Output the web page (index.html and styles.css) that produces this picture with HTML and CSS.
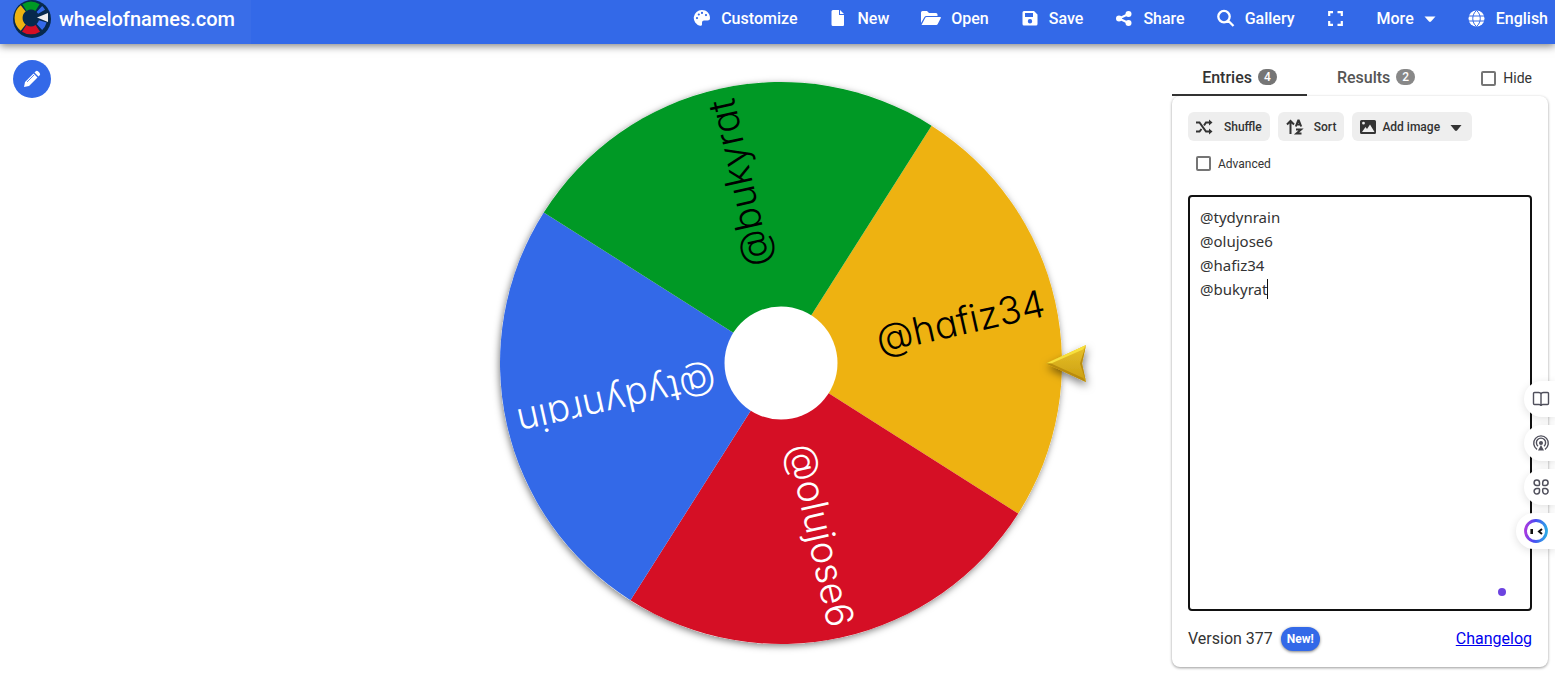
FILE: index.html
```html
<!DOCTYPE html>
<html lang="en">
<head>
  <meta charset="UTF-8">
  <meta name="viewport" content="width=device-width, initial-scale=1.0">
  <title>Wheel of Names</title>
  <link rel="stylesheet" href="styles.css">
</head>
<body>
  <header class="toolbar">
    <a class="brand" href="#">
      <svg class="logo" viewBox="0 0 38 38">
        <circle cx="19" cy="19" r="19" fill="#07294d"/>
        <g fill="none" stroke-width="8" transform="translate(18 18)">
          <path d="M-6.5-10.4A12.2 12.2 0 0 1 6.5-10.4" stroke="#009925"/>
          <path d="M-7.8 9.6A12.3 12.3 0 0 1-7.8-9.6" stroke="#eeb211"/>
          <path d="M6.8 10.3A12.3 12.3 0 0 1-6.8 10.3" stroke="#d50f25"/>
          <path d="M8.4-9A12.3 12.3 0 0 1 10.6-6.2M11.8 3.4A12.3 12.3 0 0 1 8.4 9" stroke="#3369e8"/>
        </g>
        <path d="M24 17.500L35 13v9z" fill="#eee"/>
      </svg>
      <span>wheelofnames.com</span>
    </a>
    <nav class="menu">
      <button class="menu-btn" type="button">
        <svg class="icon" viewBox="0 0 18 18"><path fill="currentColor" fill-rule="evenodd" d="M9 1a8 8 0 0 0-2 15.800C8 17 9 16.500 9 15.500V13.500a2 2 0 0 1 2-2h3.500A2.500 2.500 0 0 0 17 9C17 4.500 13.500 1 9 1zM4 10.200a1.100 1.100 0 1 1 0-2.200 1.100 1.100 0 0 1 0 2.200zM5.800 6.600a1.100 1.100 0 1 1 0-2.200 1.100 1.100 0 0 1 0 2.200zM9 5a1.100 1.100 0 1 1 0-2.200A1.100 1.100 0 0 1 9 5zM13 7.200A1.100 1.100 0 1 1 13 5a1.100 1.100 0 0 1 0 2.200z"/></svg>
        Customize
      </button>
      <button class="menu-btn" type="button">
        <svg class="icon" viewBox="0 0 18 18"><path fill="currentColor" d="M4 1h6v5h5v10a1 1 0 0 1-1 1H4a1.500 1.500 0 0 1-1.500-1.500v-13A1.500 1.500 0 0 1 4 1zM11 1l4 4h-4z"/></svg>
        New
      </button>
      <button class="menu-btn" type="button">
        <svg class="icon open" viewBox="0 0 20 18"><path fill="currentColor" d="M0 14V3.500A1.500 1.500 0 0 1 1.500 2H6l2 2h7a1.500 1.500 0 0 1 1.500 1.500V7H5.500a2.500 2.500 0 0 0-2.200 1.300zM.5 16l3.800-7.200A1.500 1.500 0 0 1 5.500 8h13.700a.7.7 0 0 1 .6 1l-3.200 6.200a1.500 1.500 0 0 1-1.300.8z"/></svg>
        Open
      </button>
      <button class="menu-btn" type="button">
        <svg class="icon" viewBox="0 0 18 18"><path fill="currentColor" fill-rule="evenodd" d="M3 2h10l3.500 3.500V15A1.500 1.500 0 0 1 15 16.500H3A1.500 1.500 0 0 1 1.500 15V3.500A1.500 1.500 0 0 1 3 2zM4 4v4h8V4zM9 10a2.200 2.200 0 1 0 0 4.400A2.200 2.200 0 0 0 9 10z"/></svg>
        Save
      </button>
      <button class="menu-btn" type="button">
        <svg class="icon" viewBox="0 0 18 18"><g fill="currentColor"><circle cx="4" cy="9.500" r="3"/><circle cx="13.500" cy="5" r="3"/><circle cx="13.500" cy="14" r="3"/></g><path d="M13.500 5L4 9.500l9.500 4.500" fill="none" stroke="currentColor" stroke-width="2"/></svg>
        Share
      </button>
      <button class="menu-btn" type="button">
        <svg class="icon" viewBox="0 0 18 18"><path d="M11.500 12l5 5M12.700 7.600a5.700 5.700 0 1 1-11.400 0 5.700 5.700 0 0 1 11.400 0z" fill="none" stroke="currentColor" stroke-width="2.300"/></svg>
        Gallery
      </button>
      <button class="menu-btn" type="button" aria-label="Fullscreen">
        <svg class="icon" viewBox="0 0 18 18"><path d="M2.200 7V3.200H6M10.500 3.200h4.300V7M14.800 12v3.800h-4.300M6 15.800H2.200V12" fill="none" stroke="currentColor" stroke-width="2.200"/></svg>
      </button>
      <button class="menu-btn" type="button">
        More
        <svg class="icon caret" viewBox="0 0 12 18"><path d="M.5 7.500h11L7 12.500a1.500 1.500 0 0 1-2 0z" fill="currentColor"/></svg>
      </button>
      <button class="menu-btn" type="button">
        <svg class="icon" viewBox="0 0 18 18"><circle cx="8.500" cy="9.500" r="8" fill="currentColor"/><path d="M.5 7h16M.5 12h16M8.500 1.500c-5 4-5 12 0 16M8.500 1.500c5 4 5 12 0 16" fill="none" stroke="#3369e8"/></svg>
        English
      </button>
    </nav>
  </header>

  <main class="page">
    <button class="edit-btn" type="button" aria-label="Edit title">
      <svg viewBox="0 0 18 18"><path fill="#fff" d="M1 17l1-5L10.500 3.500l4 4L6 16zM11.500 2.500l1-1a2 2 0 0 1 2.800 0l1.200 1.200a2 2 0 0 1 0 2.800l-1 1z"/><path d="M4 12l7-7" stroke="#3369e8" stroke-width=".8"/></svg>
    </button>

    <svg class="wheel" viewBox="0 0 620 606">
      <defs>
        <filter id="wheelShadow" x="-10%" y="-10%" width="120%" height="120%">
          <feDropShadow dx="-1" dy="2" stdDeviation="3.500" flood-opacity=".5"/>
        </filter>
        <filter id="pointerShadow" x="-50%" y="-50%" width="200%" height="200%">
          <feDropShadow dx="1" dy="4" stdDeviation="4" flood-opacity=".5"/>
        </filter>
        <linearGradient id="gold" x1="0" y1="0" x2="0" y2="1">
          <stop offset="0" stop-color="#e9c22b"/>
          <stop offset="1" stop-color="#c99d10"/>
        </linearGradient>
      </defs>
      <g transform="translate(310 303)">
        <circle r="281" fill="#fff" filter="url(#wheelShadow)"/>
        <!-- slices, each one quarter turn -->
        <g transform="rotate(-12.600)">
          <path d="M0 0L198.700-198.700A281 281 0 0 1 198.700 198.700z" fill="#eeb211"/>
          <path d="M0 0L198.700 198.700A281 281 0 0 1-198.700 198.700z" fill="#d50f25"/>
          <path d="M0 0L-198.700 198.700A281 281 0 0 1-198.700-198.700z" fill="#3369e8"/>
          <path d="M0 0L-198.700-198.700A281 281 0 0 1 198.700-198.700z" fill="#009925"/>
          <g class="names">
            <text x="270" y="12">@hafiz34</text>
            <text class="light" x="270" y="12" transform="rotate(90)">@olujose6</text>
            <text class="light" x="270" y="12" transform="rotate(180)">@tydynrain</text>
            <text x="270" y="12" transform="rotate(270)">@bukyrat</text>
          </g>
        </g>
        <circle r="56.500" fill="#fff"/>
      </g>
      <g filter="url(#pointerShadow)">
        <path d="M575 303.500L615 285l-4 18.500 4 18.500z" fill="url(#gold)"/>
        <path d="M575 303.500L615 285l-3 4.500-32 14z" fill="#f7e03c"/>
        <path d="M575 303.500L615 322l-3-4-32-14.500zM615 285l-4 18.500 4 18.500-6-18.500z" fill="#b98b0a"/>
      </g>
    </svg>

    <aside class="sidebar">
      <div class="tabs">
        <button class="tab active" type="button">Entries <span class="count">4</span></button>
        <button class="tab results" type="button">Results <span class="count">2</span></button>
        <label class="check hide"><input type="checkbox"> Hide</label>
      </div>
      <section class="card">
        <div class="actions">
          <button class="action" type="button">
            <svg class="icon" viewBox="0 0 18 18"><path d="M0 4.500h3.500l6.500 9h4M0 13.500h3.500L5.500 11M8 7.500l2-3h4" fill="none" stroke="currentColor" stroke-width="2"/><path d="M13 1.500l3.500 3-3.500 3zM13 10.500l3.500 3-3.500 3z" fill="currentColor"/></svg>
            Shuffle
          </button>
          <button class="action" type="button">
            <svg class="icon" viewBox="0 0 18 18"><path d="M4.500 16V3M1 6.500L4.500 3 8 6.500M9.800 8.500L12.200 2.500h.6l2.400 6M10.500 6.500h4M10 11.500h5l-4.500 4h5" fill="none" stroke="currentColor" stroke-width="2"/></svg>
            Sort
          </button>
          <button class="action image" type="button">
            <svg class="icon" viewBox="0 0 18 18"><path fill="currentColor" fill-rule="evenodd" d="M1.500 2h13A1.500 1.500 0 0 1 16 3.500v11a1.500 1.500 0 0 1-1.500 1.500h-13A1.500 1.500 0 0 1 0 14.500v-11A1.500 1.500 0 0 1 1.500 2zM2 14h12.500L10 6.500l-3 4.500-1.500-2zM3.500 3.800a1.400 1.400 0 1 0 0 2.800 1.400 1.400 0 0 0 0-2.800z"/></svg>
            Add image
            <svg class="icon caret" viewBox="0 0 12 18"><path d="M.5 7h11L7 12.500a1.500 1.500 0 0 1-2 0z" fill="currentColor"/></svg>
          </button>
        </div>
        <label class="check advanced"><input type="checkbox"> Advanced</label>
        <div class="entries">
          <textarea rows="16" aria-label="Entries" spellcheck="false">@tydynrain
@olujose6
@hafiz34
@bukyrat</textarea>
          <span class="cursor"></span>
          <span class="dot"></span>
        </div>
        <footer class="version">
          <span>Version 377</span>
          <span class="new">New!</span>
          <a href="#">Changelog</a>
        </footer>
      </section>
    </aside>
  </main>

  <div class="dock">
    <button type="button" aria-label="Read">
      <svg viewBox="0 0 18 18"><path d="M9 4.500C9 3 8 2.500 6.500 2.500H2.500a1 1 0 0 0-1 1v10a1 1 0 0 0 1 1H7c1 0 2 .5 2 1.500 0-1 1-1.500 2-1.500h4.500a1 1 0 0 0 1-1v-10a1 1 0 0 0-1-1h-4C10 2.500 9 3 9 4.500zV16" fill="none" stroke="#50505c" stroke-width="1.400"/></svg>
    </button>
    <button type="button" aria-label="Podcast">
      <svg viewBox="0 0 18 18"><path d="M5 15.300a7.300 7.300 0 1 1 8 0M6 12.200a4.600 4.600 0 1 1 6 0" fill="none" stroke="#50505c" stroke-width="1.400"/><circle cx="9" cy="9" r="2" fill="#50505c"/><path d="M9 11l3 5.500H6z" fill="#50505c"/></svg>
    </button>
    <button type="button" aria-label="Apps">
      <svg viewBox="0 0 18 18"><path d="M4.800 2a2.700 2.700 0 1 0 0 5.400h1.700a1 1 0 0 0 1-1V4.700A2.700 2.700 0 0 0 4.800 2zM13.400 2a2.700 2.700 0 1 1 0 5.400h-1.700a1 1 0 0 1-1-1V4.700A2.700 2.700 0 0 1 13.400 2zM4.800 16a2.700 2.700 0 1 1 0-5.400h1.700a1 1 0 0 1 1 1v1.700A2.700 2.700 0 0 1 4.800 16zM13.400 16a2.700 2.700 0 1 0 0-5.400h-1.700a1 1 0 0 0-1 1v1.700a2.700 2.700 0 0 0 2.700 2.700z" fill="none" stroke="#50505c" stroke-width="1.500"/></svg>
    </button>
    <button class="assistant" type="button" aria-label="Assistant">
      <svg viewBox="0 0 24 24">
        <defs>
          <linearGradient id="ring" x1="0" y1=".6" x2="1" y2=".7">
            <stop offset="0" stop-color="#a43be0"/>
            <stop offset=".4" stop-color="#4a49f2"/>
            <stop offset="1" stop-color="#2ca9e6"/>
          </linearGradient>
        </defs>
        <circle cx="12" cy="12" r="10.500" fill="#fff" stroke="url(#ring)" stroke-width="2.800"/>
        <path d="M7.700 10v5" stroke="#111" stroke-width="2.600"/>
        <path d="M18 10l-3 2.500 3 2.500" fill="none" stroke="#111" stroke-width="2"/>
      </svg>
    </button>
  </div>
</body>
</html>
```
FILE: styles.css
```css
* {
  box-sizing: border-box;
}
body {
  margin: 0;
  background: #fff;
  color: #333;
  font-family: Roboto, sans-serif;
  font-size: 16px;
}
button {
  border: none;
  font-family: inherit;
  cursor: pointer;
}
.icon {
  width: 18px;
  height: 18px;
  flex: none;
}
.caret {
  width: 12px;
}
.open {
  width: 20px;
}

/* top bar */
.toolbar {
  display: flex;
  justify-content: space-between;
  height: 44px;
  padding-right: 7px;
  background: #3369e8;
  box-shadow: 0 2px 8px rgba(0, 0, 0, 0.5);
}
.brand {
  display: flex;
  gap: 8px;
  height: 44px;
  padding: 0 16px 7px 13px;
  align-items: center;
  background: rgba(255, 255, 255, 0.03);
  color: #fff;
  font-size: 20px;
  font-weight: 500;
  text-decoration: none;
}
.logo {
  width: 38px;
  height: 38px;
  flex: none;
}
.menu {
  display: flex;
  gap: 32px;
  align-items: center;
  padding-bottom: 8px;
}
.menu-btn {
  display: flex;
  gap: 10px;
  align-items: center;
  padding: 0;
  background: none;
  color: #fff;
  font-size: 16px;
  font-weight: 500;
}

/* main area */
.page {
  display: grid;
  grid-template-columns: 1fr minmax(0, 620px) 1fr;
  padding: 16px 7px 7px 13px;
}
.edit-btn {
  display: flex;
  align-items: center;
  justify-content: center;
  width: 38px;
  height: 38px;
  padding: 0;
  border-radius: 50%;
  background: #3369e8;
}
.edit-btn svg {
  width: 18px;
  height: 18px;
}
.wheel {
  width: 100%;
  overflow: visible;
}
.names text {
  font-family: Inter, sans-serif;
  font-size: 38px;
  font-weight: 300;
  font-feature-settings: "cv11";
  text-anchor: end;
  fill: #000;
}
.names .light {
  fill: #fff;
}

/* sidebar */
.sidebar {
  width: 376px;
  justify-self: end;
}
.tabs {
  display: flex;
  height: 36px;
}
.tab {
  display: flex;
  gap: 6px;
  align-items: center;
  justify-content: center;
  width: 135px;
  padding: 0;
  border-bottom: 2px solid transparent;
  background: none;
  color: #555;
  font-size: 16px;
  font-weight: 500;
}
.tab.active {
  border-color: #333;
  color: #333;
}
.tab.results {
  width: 138px;
}
.count {
  padding: 0 6px;
  border-radius: 8px;
  background: #757575;
  color: #fff;
  font-size: 12px;
  line-height: 16px;
}
.results .count {
  background: #888;
}
.check {
  display: flex;
  gap: 7px;
  align-items: center;
  font-size: 14px;
}
.check input {
  appearance: none;
  width: 15px;
  height: 15px;
  margin: 0;
  border: 2px solid #757575;
  border-radius: 2px;
}
.hide {
  margin-left: auto;
  padding-right: 16px;
}
.card {
  padding: 16px;
  border-radius: 8px;
  box-shadow: 0 1px 3px rgba(0, 0, 0, 0.4);
}
.actions {
  display: flex;
  gap: 8px;
}
.action {
  display: flex;
  gap: 10px;
  align-items: center;
  height: 29px;
  padding: 0 8px;
  border-radius: 6px;
  background: #eee;
  color: #333;
  font-size: 12px;
  font-weight: 500;
}
.image {
  gap: 4px;
}
.image .caret {
  margin: 0 2px 0 6px;
}
.advanced {
  height: 45px;
  padding-left: 8px;
  font-size: 12px;
}
.entries {
  position: relative;
  margin-top: 9px;
}
.entries textarea {
  display: block;
  width: 100%;
  padding: 8px 10px 20px;
  border: 2px solid #111;
  border-radius: 4px;
  outline: none;
  resize: none;
  color: #333;
  font: 15px/24px "Noto Sans", sans-serif;
}
.cursor {
  position: absolute;
  top: 84px;
  left: 79px;
  width: 1px;
  height: 20px;
  background: #111;
}
.dot {
  position: absolute;
  right: 26px;
  bottom: 15px;
  width: 8px;
  height: 8px;
  border-radius: 50%;
  background: #6c43e0;
}
.version {
  display: flex;
  gap: 8px;
  align-items: center;
  margin-top: 16px;
  line-height: 24px;
}
.new {
  padding: 0 6px;
  border-radius: 12px;
  background: #3369e8;
  box-shadow: 0 1px 3px rgba(0, 0, 0, 0.5);
  color: #fff;
  font-size: 12px;
  font-weight: 700;
}
.version a {
  margin-left: auto;
  color: #00e;
}

/* floating buttons on the window edge */
.dock {
  position: fixed;
  top: 381px;
  right: 0;
  display: flex;
  flex-direction: column;
  gap: 8px;
  align-items: flex-end;
}
.dock button {
  display: flex;
  align-items: center;
  width: 31px;
  height: 36px;
  padding: 0 0 0 8px;
  border-radius: 18px 0 0 18px;
  background: #fff;
  box-shadow: 0 2px 8px rgba(0, 0, 0, 0.12);
}
.dock svg {
  width: 18px;
  height: 18px;
  flex: none;
}
.dock .assistant {
  width: 39px;
}
.dock .assistant svg {
  width: 24px;
  height: 24px;
}
```
